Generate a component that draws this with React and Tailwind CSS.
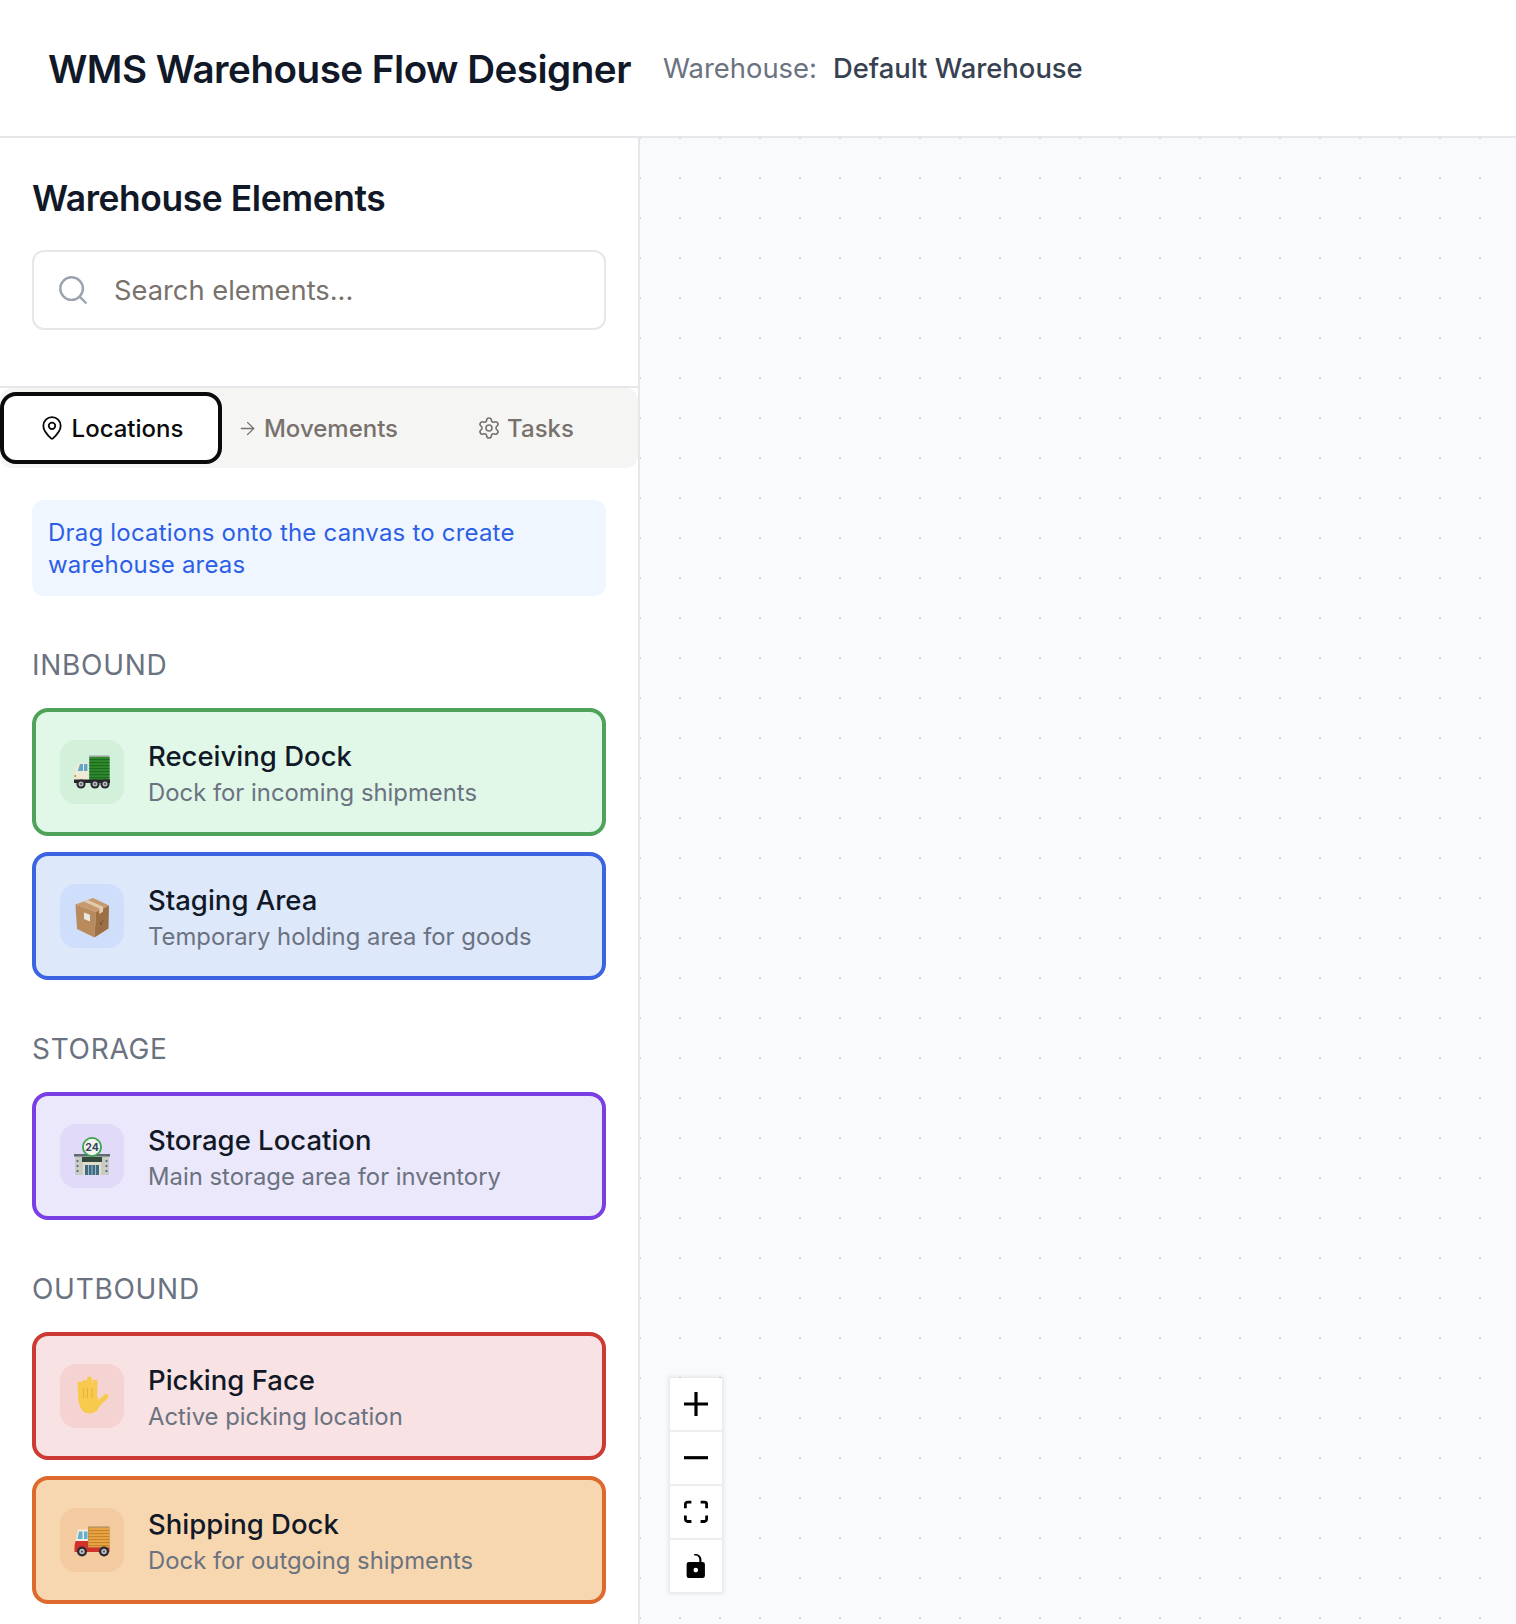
import React from "react";
import { ArrowRight, MapPin, Search, Settings } from "lucide-react";

function Wheel({ x, y, r = 4.6 }) {
  return (
    <g>
      <circle cx={x} cy={y} r={r} fill="#2a2a2e" />
      <circle cx={x} cy={y} r={r * 0.55} fill="#b9bcc2" />
      <circle cx={x} cy={y} r={r * 0.22} fill="#55585e" />
    </g>
  );
}

function GreenTruck() {
  return (
    <svg viewBox="0 0 64 64" className="w-16 h-16">
      <rect x="29" y="15.5" width="20.5" height="25" fill="#9aa3a0" />
      <rect x="29.5" y="17" width="20" height="23.5" fill="#2f8a2c" />
      {[19, 22, 25, 28, 31, 34, 37].map((y) => (
        <rect key={y} x="29.5" y={y} width="20" height="1.2" fill="#1e6a1f" />
      ))}
      <path d="M15 29l3-6h10v18H14.500z" fill="#efe9d5" />
      <path d="M17.800 31l2.200-7h3v7zM24 24h3.400v7H24z" fill="#5ea7c8" />
      <rect x="14" y="39.500" width="36" height="3.500" fill="#26262a" />
      <rect x="14.500" y="35" width="1.600" height="2" fill="#e8862a" />
      <Wheel x={21} y={44} />
      <Wheel x={35} y={44} />
      <Wheel x={45} y={44} />
    </svg>
  );
}

function PackageBox() {
  return (
    <svg viewBox="0 0 64 64" className="w-16 h-16">
      <path d="M15.500 20.500L33 14l16 7.500L36 28z" fill="#c69a6c" />
      <path d="M15.500 20.500L36 28l-1.500 25.500L17 45z" fill="#b98a5c" />
      <path d="M36 28l13-6.500-.5 23-14 9z" fill="#9c6f45" />
      <path d="M23.500 17.500l16 7-.5 5.500 4-2.300.2-5-15.700-7z" fill="#dfcbae" />
      <path d="M24 28.500l6 2.300v6.700l-6-2.500z" fill="#e9e7e1" />
      <path d="M40 38l1 3 2-5" fill="none" stroke="#6d4a2b" strokeWidth="0.8" />
    </svg>
  );
}

function Store() {
  return (
    <svg viewBox="0 0 64 64" className="w-16 h-16">
      <rect x="15" y="32" width="34" height="19" fill="#c9ccc4" />
      <rect x="14" y="30" width="36" height="2.500" fill="#5e6b70" />
      <path d="M23 37h18v14H23z" fill="#e3dcc6" />
      <rect x="22" y="33" width="20" height="5" fill="#314a3d" />
      <rect x="25" y="41" width="14" height="10" fill="#3d6a85" />
      <path d="M28.500 41v10M32 41v10M35.500 41v10" stroke="#cfd8dc" strokeWidth="0.7" />
      <path d="M17.500 36v2M17.500 41v2M17.500 46v2M46.500 36v2M46.500 41v2M46.500 46v2" stroke="#556a75" strokeWidth="1.800" />
      <circle cx="32" cy="23" r="10" fill="#3aa34e" />
      <circle cx="32" cy="23" r="8.200" fill="#f3f3f0" />
      <text x="32" y="26.800" textAnchor="middle" fontFamily="Inter, sans-serif" fontWeight="700" fontSize="10.500" fill="#33415c">24</text>
    </svg>
  );
}

function Hand() {
  return (
    <svg viewBox="0 0 64 64" className="w-16 h-16">
      <g stroke="#f7ca4d" strokeWidth="5" strokeLinecap="round" fill="none">
        <path d="M20 20l.8 17M24.800 18.500l1 17M29.500 15v18M35 18l-.5 16M37 41l9-8.500" />
      </g>
      <path d="M18.500 33h19.500l2 9-3 4.500c-2 2-5 3-8 3-6 0-9-5-10-11z" fill="#f7ca4d" />
      <path d="M23.300 24l.5 10M27.300 24v10M32.200 24l-.2 10" stroke="#dfa630" strokeWidth="0.8" fill="none" />
    </svg>
  );
}

function RedTruck() {
  return (
    <svg viewBox="0 0 64 64" className="w-16 h-16">
      <rect x="28" y="18.500" width="21.500" height="22" fill="#9b8a63" />
      <rect x="28.500" y="19.500" width="21" height="20" fill="#e8a544" />
      {[22, 25, 28, 31, 34, 37].map((y) => (
        <rect key={y} x="28.500" y={y} width="21" height="1.100" fill="#c9812b" />
      ))}
      <path d="M18 21.500h10V36H15z" fill="#f1ede2" />
      <path d="M19 23.500h3.500v7.500h-5zM24 23.500h3.500v7.500H24z" fill="#66aecd" />
      <path d="M15.500 33H28v6.500h21.500v4.500H14.500v-6z" fill="#d3322c" />
      <Wheel x={22} y={43.500} r={5} />
      <Wheel x={44} y={43.500} r={5} />
    </svg>
  );
}

function ElementCard({ title, desc, icon, card, box }) {
  return (
    <div className={`flex items-center gap-6 h-32 px-6 rounded-2xl border-4 ${card}`}>
      <div className={`w-16 h-16 shrink-0 rounded-2xl overflow-hidden ${box}`}>{icon}</div>
      <div className="pt-[3px]">
        <div className="text-[27.5px] leading-9 font-medium text-[#111827]">{title}</div>
        <div className="text-[23.85px] leading-8 mt-[3px] text-[#6b7280]">{desc}</div>
      </div>
    </div>
  );
}

function Section({ label, children }) {
  return (
    <div className="mt-12">
      <h3 className="text-[28px] leading-10 mb-6 tracking-[0.7px] text-[#6b7280] pt-px">{label}</h3>
      <div className="-mt-px flex flex-col gap-4">{children}</div>
    </div>
  );
}

function ControlButton({ children, last }) {
  return (
    <button className={`w-[52px] h-[52px] flex items-center justify-center bg-white ${last ? "" : "mb-0.5"}`}>
      {children}
    </button>
  );
}

export default function App() {
  return (
    <div className="h-screen flex flex-col overflow-hidden bg-white font-['Inter',sans-serif]">
      {/* Header */}
      <header className="h-[138px] shrink-0 flex items-center pl-12 border-b-2 border-[#e5e7eb]">
        <h1 className="pt-0.5 text-[38.6px] leading-none font-semibold text-[#111827] tracking-[-0.5px]">WMS Warehouse Flow Designer</h1>
        <span className="ml-8 pt-0.5 text-[27.4px] text-[#6b7280]">Warehouse:</span>
        <span className="ml-4 pt-0.5 text-[27.4px] font-medium text-[#374151]">Default Warehouse</span>
      </header>

      <div className="flex-1 flex min-h-0">
        {/* Sidebar */}
        <aside className="w-[640px] shrink-0 border-r-2 border-[#e5e7eb]">
          <div className="px-8 pt-10 pb-14 border-b-2 border-[#e5e7eb]">
            <h2 className="pt-px -mb-px text-[35.4px] leading-10 font-semibold text-[#111827] tracking-[-0.4px]">Warehouse Elements</h2>
            <div className="mt-8 h-20 flex items-center pl-[22px] rounded-xl border-2 border-[#e5e7eb]">
              <Search size={34} strokeWidth={1.7} className="text-[#9ca3af]" />
              <span className="ml-6 pt-0.5 text-[27.3px] text-[#78716c]">Search elements...</span>
            </div>
          </div>

          <div className="flex items-center h-20 rounded-xl bg-[#f5f5f4]">
            <div className="w-[222px] h-[72px] flex items-center justify-center gap-[7px] rounded-2xl border-4 border-[#0a0a0a] bg-white text-[#0a0a0a]">
              <MapPin size={26} strokeWidth={1.7} />
              <span className="pt-0.5 text-[24px] font-medium">Locations</span>
            </div>
            <div className="w-[191px] flex items-center justify-center gap-1.5 text-[#78716c]">
              <ArrowRight size={21} strokeWidth={1.5} />
              <span className="pt-0.5 text-[24px] font-medium">Movements</span>
            </div>
            <div className="flex-1 flex items-center justify-center gap-1.5 text-[#78716c]">
              <Settings size={24} strokeWidth={1.6} />
              <span className="pt-0.5 text-[24px] font-medium">Tasks</span>
            </div>
          </div>

          <div className="px-8 pt-8">
            <div className="h-24 px-4 pt-[17px] rounded-xl bg-[#eff6ff] text-[24px] leading-8 tracking-[0.2px] text-[#2d5fe6]">
              Drag locations onto the canvas to create warehouse areas
            </div>

            <Section label="INBOUND">
              <ElementCard
                title="Receiving Dock"
                desc="Dock for incoming shipments"
                icon={<GreenTruck />}
                card="bg-[#e1f8e8] border-[#4fa25a]"
                box="bg-[#d2f0da]"
              />
              <ElementCard
                title="Staging Area"
                desc="Temporary holding area for goods"
                icon={<PackageBox />}
                card="bg-[#dee8fb] border-[#3b64e0]"
                box="bg-[#cfdefb]"
              />
            </Section>

            <Section label="STORAGE">
              <ElementCard
                title="Storage Location"
                desc="Main storage area for inventory"
                icon={<Store />}
                card="bg-[#ece8fb] border-[#7a3fe4]"
                box="bg-[#e1daf9]"
              />
            </Section>

            <Section label="OUTBOUND">
              <ElementCard
                title="Picking Face"
                desc="Active picking location"
                icon={<Hand />}
                card="bg-[#f8e2e3] border-[#cd3a33]"
                box="bg-[#f5d3d2]"
              />
              <ElementCard
                title="Shipping Dock"
                desc="Dock for outgoing shipments"
                icon={<RedTruck />}
                card="bg-[#f7d7af] border-[#dd692c]"
                box="bg-[#f4cba1]"
              />
            </Section>
          </div>
        </aside>

        {/* Canvas */}
        <main className="relative flex-1 bg-[#f9fafb] bg-[radial-gradient(#d4d5d9_1px,transparent_1.4px)] bg-[size:40px_40px] bg-[position:-20px_-20px]">
          <div className="absolute left-[30px] bottom-8 flex flex-col bg-[#eeeeee] shadow-[0_0_4px_2px_rgba(0,0,0,0.08)]">
            <ControlButton>
              <svg viewBox="0 0 32 32" className="w-6 h-6">
                <path d="M32 18.133H18.133V32h-4.266V18.133H0v-4.266h13.867V0h4.266v13.867H32z" />
              </svg>
            </ControlButton>
            <ControlButton>
              <svg viewBox="0 0 32 5" className="w-6 h-6">
                <path d="M0 0h32v4.2H0z" />
              </svg>
            </ControlButton>
            <ControlButton>
              <svg viewBox="0 0 32 30" className="w-6 h-6">
                <path d="M3.692 4.63c0-.53.4-.938.939-.938h5.215V0H4.708C2.13 0 0 2.054 0 4.63v5.216h3.692V4.631zM27.354 0h-5.2v3.692h5.17c.53 0 .984.4.984.939v5.215H32V4.631A4.624 4.624 0 0027.354 0zm.954 24.83c0 .532-.4.94-.939.94h-5.215v3.768h5.215c2.577 0 4.631-2.13 4.631-4.707v-5.139h-3.692v5.139zm-23.677.94c-.531 0-.939-.4-.939-.94v-5.138H0v5.139c0 2.577 2.13 4.707 4.708 4.707h5.138V25.77H4.631z" />
              </svg>
            </ControlButton>
            <ControlButton last>
              <svg viewBox="0 0 25 32" className="w-6 h-6">
                <path d="M21.333 10.667H19.81V7.619C19.81 3.429 16.38 0 12.19 0c-4.114 0-2 1.500-1 2.200 3-1 5.724 1.800 5.724 5.419v3.048H3.047A3.056 3.056 0 000 13.714v15.238A3.056 3.056 0 003.048 32h18.285a3.056 3.056 0 003.048-3.048V13.714a3.056 3.056 0 00-3.048-3.047zM12.19 24.533a3.056 3.056 0 01-3.047-3.047 3.056 3.056 0 013.047-3.048 3.056 3.056 0 013.048 3.048 3.056 3.056 0 01-3.048 3.047z" />
              </svg>
            </ControlButton>
          </div>
        </main>
      </div>
    </div>
  );
}
